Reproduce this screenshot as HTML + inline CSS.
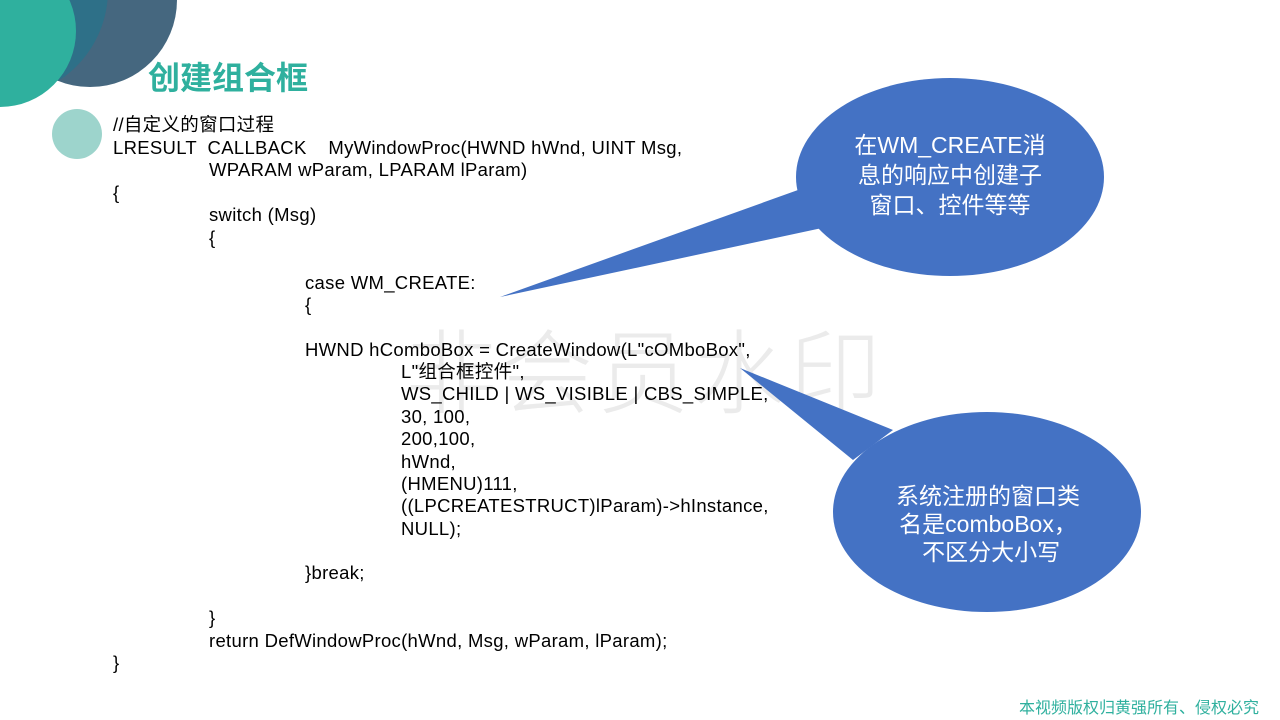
<!DOCTYPE html>
<html><head><meta charset="utf-8"><style>
html,body{margin:0;padding:0}
body{width:1280px;height:720px;position:relative;overflow:hidden;background:#fff;font-family:"Liberation Sans","Noto Sans CJK SC",sans-serif}
.l{position:absolute;font-size:18.5px;letter-spacing:0.3px;color:#000;white-space:pre;line-height:22px;margin-top:1px}
.wm{position:absolute;left:405px;top:300px;font-size:92px;color:#ebebeb;letter-spacing:4px;font-family:"Noto Sans CJK SC",sans-serif;font-weight:300}
.bt{position:absolute;color:#fff;font-size:23px;text-align:center;line-height:30px;font-family:"Liberation Sans","Noto Sans CJK SC",sans-serif}
</style></head><body>
<div class="wm">非会员水印</div>
<svg width="1280" height="720" style="position:absolute;left:0;top:0">
<defs><clipPath id="c"><circle cx="90" cy="0" r="87"/></clipPath></defs>
<circle cx="90" cy="0" r="87" fill="#45677f"/>
<circle cx="0" cy="-10" r="108" fill="#2e7088" clip-path="url(#c)"/>
<circle cx="0" cy="31" r="76" fill="#2fb09e"/>
<circle cx="77" cy="134" r="25" fill="#9dd4cc"/>
<polygon points="798,190 822,228 500,297" fill="#4472c4"/>
<ellipse cx="950" cy="177" rx="154" ry="99" fill="#4472c4"/>
<polygon points="893,430 853,460 740,368" fill="#4472c4"/>
<ellipse cx="987" cy="512" rx="154" ry="100" fill="#4472c4"/>
</svg>
<div style="position:absolute;left:148px;top:56px;font-size:32px;font-weight:bold;color:#2fb09e;font-family:'Noto Sans CJK SC',sans-serif;line-height:40px">创建组合框</div>
<div class="l" style="left:113px;top:113px">//自定义的窗口过程</div>
<div class="l" style="left:113px;top:136px">LRESULT  CALLBACK    MyWindowProc(HWND hWnd, UINT Msg,</div>
<div class="l" style="left:209px;top:158px">WPARAM wParam, LPARAM lParam)</div>
<div class="l" style="left:113px;top:181px">{</div>
<div class="l" style="left:209px;top:203px">switch (Msg)</div>
<div class="l" style="left:209px;top:226px">{</div>
<div class="l" style="left:305px;top:271px">case WM_CREATE:</div>
<div class="l" style="left:305px;top:293px">{</div>
<div class="l" style="left:305px;top:338px">HWND hComboBox = CreateWindow(L"cOMboBox",</div>
<div class="l" style="left:401px;top:360px">L"组合框控件",</div>
<div class="l" style="left:401px;top:382px">WS_CHILD | WS_VISIBLE | CBS_SIMPLE,</div>
<div class="l" style="left:401px;top:405px">30, 100,</div>
<div class="l" style="left:401px;top:427px">200,100,</div>
<div class="l" style="left:401px;top:450px">hWnd,</div>
<div class="l" style="left:401px;top:472px">(HMENU)111,</div>
<div class="l" style="left:401px;top:494px">((LPCREATESTRUCT)lParam)-&gt;hInstance,</div>
<div class="l" style="left:401px;top:517px">NULL);</div>
<div class="l" style="left:305px;top:561px">}break;</div>
<div class="l" style="left:209px;top:606px">}</div>
<div class="l" style="left:209px;top:629px">return DefWindowProc(hWnd, Msg, wParam, lParam);</div>
<div class="l" style="left:113px;top:651px">}</div>
<div class="bt" style="left:830px;top:130px;width:240px">在WM_CREATE消<br>息的响应中创建子<br>窗口、控件等等</div>
<div class="bt" style="left:868px;top:482px;width:240px;line-height:28px">系统注册的窗口类<br>名是comboBox，<br>&nbsp;不区分大小写</div>
<div style="position:absolute;left:1019px;top:694px;font-size:16px;color:#2fb09e;font-family:'Noto Sans CJK SC',sans-serif">本视频版权归黄强所有、侵权必究</div>
</body></html>
